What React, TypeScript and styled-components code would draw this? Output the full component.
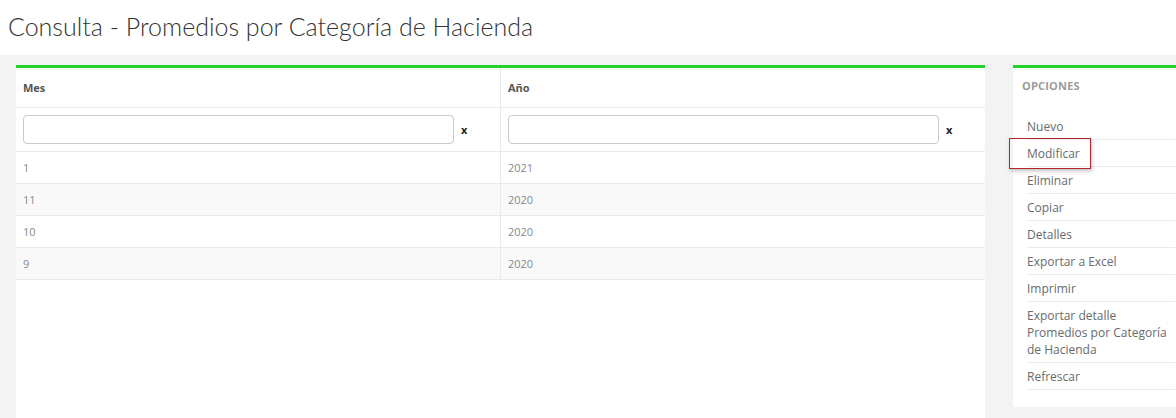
import React from 'react';
import styled, { createGlobalStyle } from 'styled-components';

const GlobalStyle = createGlobalStyle`
  html, body {
    margin: 0;
    padding: 0;
    background: #f3f3f4;
    overflow: hidden;
  }
  body {
    font-family: "Open Sans", "Liberation Sans", sans-serif;
    color: #676a6c;
    font-size: 12px;
  }
`

const Header = styled.header`
  background: #ffffff;
  height: 55px;
  padding: 0 8px;
  display: flex;
  align-items: center;
`

const Title = styled.h2`
  margin: 0;
  font-family: Lato, "Open Sans", sans-serif;
  font-weight: 300;
  font-size: 25px;
  color: #333333;
  padding-bottom: 3px;
`

const Content = styled.div`
  display: flex;
  align-items: flex-start;
  gap: 28px;
  padding: 10px 0 0 16px;
  width: 100%;
  height: 363px;
  box-sizing: border-box;
  overflow: hidden;
`

const Box = styled.section<{ $width: number; $height: number }>`
  background: #ffffff;
  border-top: 3px solid #25d12c;
  width: ${p => p.$width}px;
  height: ${p => p.$height}px;
  box-sizing: border-box;
  flex-shrink: 0;
`

const Table = styled.table`
  width: 100%;
  border-collapse: collapse;
  table-layout: fixed;
`

const HeadCell = styled.th`
  text-align: left;
  font-weight: 700;
  font-size: 11px;
  color: #555;
  height: 39px;
  padding: 0 7px;
  border-bottom: 1px solid #e7eaec;
  & + & {
    border-left: 1px solid #e7eaec;
  }
`

const FilterCell = styled.td`
  height: 43px;
  padding: 0 7px;
  border-bottom: 1px solid #e7eaec;
  & + & {
    border-left: 1px solid #e7eaec;
  }
`

const FilterWrap = styled.div`
  display: flex;
  align-items: center;
  gap: 7px;
`

const FilterInput = styled.input`
  flex: 1;
  height: 29px;
  box-sizing: border-box;
  border: 1px solid #c9c9c9;
  border-radius: 4px;
  padding: 0 8px;
  font-family: inherit;
  outline: none;
`

const Clear = styled.span`
  font-weight: 700;
  font-size: 11px;
  color: #222;
  width: 32px;
`

const Row = styled.tr<{ $striped: boolean }>`
  background: ${p => (p.$striped ? '#f9f9f9' : '#ffffff')};
`

const Cell = styled.td`
  height: 31px;
  padding: 0 7px;
  font-size: 11px;
  color: #888888;
  border-bottom: 1px solid #e7eaec;
  & + & {
    border-left: 1px solid #e7eaec;
  }
`

const OptionsTitle = styled.h5`
  margin: 0;
  padding: 10px 9px 0;
  height: 45px;
  box-sizing: border-box;
  font-size: 11px;
  font-weight: 700;
  color: #9b9b9b;
  letter-spacing: 0.2px;
`

const OptionList = styled.ul`
  list-style: none;
  margin: 0;
  padding: 0 8px 0 14px;
`

const OptionItem = styled.li<{ $active?: boolean }>`
  position: relative;
  padding: 4.5px 0 4.5px;
  line-height: 17px;
  font-size: 12px;
  color: #676a6c;
  border-bottom: 1px solid #e7eaec;
  &::before {
    content: '';
    display: ${p => (p.$active ? 'block' : 'none')};
    position: absolute;
    left: -18px;
    top: -2px;
    width: 80px;
    height: 29px;
    border: 1.5px solid #b3262c;
    box-shadow: 1px 2px 4px rgba(0, 0, 0, 0.25);
  }
`

const rows = [
  { mes: '1', anio: '2021' },
  { mes: '11', anio: '2020' },
  { mes: '10', anio: '2020' },
  { mes: '9', anio: '2020' },
]

const options = [
  'Nuevo',
  'Modificar',
  'Eliminar',
  'Copiar',
  'Detalles',
  'Exportar a Excel',
  'Imprimir',
  'Exportar detalle Promedios por Categoría de Hacienda',
  'Refrescar',
]

const App: React.FC = () => {
  return (
    <>
      <GlobalStyle />
      <Header>
        <Title>Consulta - Promedios por Categoría de Hacienda</Title>
      </Header>
      <Content>
        <Box $width={969} $height={360}>
          <Table>
            <thead>
              <tr>
                <HeadCell>Mes</HeadCell>
                <HeadCell>Año</HeadCell>
              </tr>
              <tr>
                <FilterCell>
                  <FilterWrap>
                    <FilterInput />
                    <Clear>x</Clear>
                  </FilterWrap>
                </FilterCell>
                <FilterCell>
                  <FilterWrap>
                    <FilterInput />
                    <Clear>x</Clear>
                  </FilterWrap>
                </FilterCell>
              </tr>
            </thead>
            <tbody>
              {rows.map((r, i) => (
                <Row key={i} $striped={i % 2 === 1}>
                  <Cell>{r.mes}</Cell>
                  <Cell>{r.anio}</Cell>
                </Row>
              ))}
            </tbody>
          </Table>
        </Box>
        <Box $width={170} $height={342}>
          <OptionsTitle>OPCIONES</OptionsTitle>
          <OptionList>
            {options.map(o => (
              <OptionItem key={o} $active={o === 'Modificar'}>
                {o}
              </OptionItem>
            ))}
          </OptionList>
        </Box>
      </Content>
    </>
  )
}

export default App;
